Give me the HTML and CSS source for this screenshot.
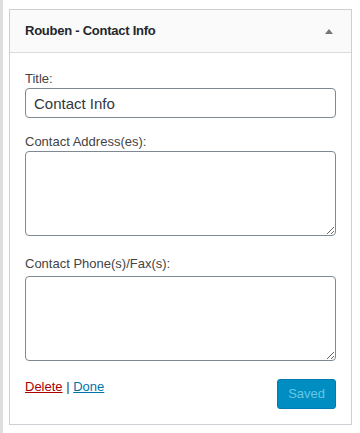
FILE: index.html
```html
<!DOCTYPE html>
<html lang="en">
<head>
<meta charset="utf-8">
<title>Widget</title>
<link rel="stylesheet" href="styles.css">
</head>
<body>
<div class="screen">
  <div class="rail"></div>
  <div class="widget">
    <div class="widget-top">
      <h3 class="widget-title">Rouben - Contact Info</h3>
      <svg class="toggle" width="8" height="5" viewBox="0 0 8 5" aria-hidden="true"><polygon points="0,5 4,0 8,5" fill="#72777c"/></svg>
    </div>
    <form class="widget-inside">
      <label class="field-label label-title" for="w-title">Title:</label>
      <input id="w-title" class="field-input" type="text" value="Contact Info">
      <label class="field-label label-address" for="w-address">Contact Address(es):</label>
      <textarea id="w-address" class="field-area"></textarea>
      <label class="field-label label-phone" for="w-phone">Contact Phone(s)/Fax(s):</label>
      <textarea id="w-phone" class="field-area"></textarea>
      <div class="widget-actions">
        <div class="action-links"><a class="link-delete" href="#">Delete</a> <span class="sep">|</span> <a class="link-done" href="#">Done</a></div>
        <button class="button-primary" type="button" disabled>Saved</button>
      </div>
    </form>
  </div>
</div>
</body>
</html>
```
FILE: styles.css
```css
html, body {
  margin: 0;
  padding: 0;
  background: #ffffff;
}
body {
  font-family: "Liberation Sans", Arial, sans-serif;
  font-size: 13px;
  color: #444444;
}
.screen {
  display: flex;
  align-items: flex-start;
  width: 360px;
  height: 433px;
  overflow: hidden;
}
.rail {
  width: 3px;
  height: 433px;
  background: #dcdee0;
  flex: none;
}
.widget {
  margin: 9px 0 0 6px;
  width: 343px;
  box-sizing: border-box;
  border: 1px solid #ccd0d4;
  background: #ffffff;
  flex: none;
}
.widget-top {
  height: 42px;
  display: flex;
  align-items: center;
  justify-content: space-between;
  padding: 0 18px 0 15px;
  background: #fafafa;
  border-bottom: 1px solid #dcdcde;
}
.widget-title {
  margin: 0;
  font-size: 13px;
  line-height: 18px;
  font-weight: 700;
  letter-spacing: -0.25px;
  color: #23282d;
}
.toggle {
  display: block;
}
.widget-inside {
  display: flex;
  flex-direction: column;
  margin: 0;
  padding: 0 15px 15px;
}
.field-label {
  display: block;
  font-size: 13px;
  line-height: 18px;
  color: #444444;
}
.label-title {
  margin-top: 17px;
}
.label-address {
  margin-top: 15px;
}
.label-phone {
  margin-top: 19px;
  margin-bottom: 3px;
}
.field-input {
  display: block;
  box-sizing: border-box;
  width: 100%;
  height: 30px;
  margin: 0;
  padding: 0 8px;
  border: 1px solid #7e8993;
  border-radius: 4px;
  background: #ffffff;
  font-family: "Liberation Sans", Arial, sans-serif;
  font-size: 15px;
  color: #32373c;
  outline: none;
}
.field-area {
  display: block;
  box-sizing: border-box;
  width: 100%;
  height: 85px;
  margin: 0;
  padding: 2px 6px;
  border: 1px solid #7e8993;
  border-radius: 4px;
  background: #ffffff;
  font-family: "Liberation Sans", Arial, sans-serif;
  font-size: 14px;
  color: #32373c;
  resize: vertical;
  outline: none;
}
.widget-actions {
  display: flex;
  justify-content: space-between;
  align-items: flex-start;
  margin-top: 17px;
}
.action-links {
  font-size: 13px;
  line-height: 18px;
  color: #444444;
}
.link-delete {
  color: #aa0000;
  text-decoration: underline;
}
.link-done {
  color: #0073aa;
  text-decoration: underline;
}
.sep {
  color: #32373c;
}
.button-primary {
  margin-top: 1px;
  height: 30px;
  box-sizing: border-box;
  padding: 0 10px;
  border: 1px solid #007cb2;
  border-radius: 3px;
  background: #008ec2;
  color: #66c6e4;
  font-family: "Liberation Sans", Arial, sans-serif;
  font-size: 13px;
  line-height: 28px;
  cursor: default;
}
```
